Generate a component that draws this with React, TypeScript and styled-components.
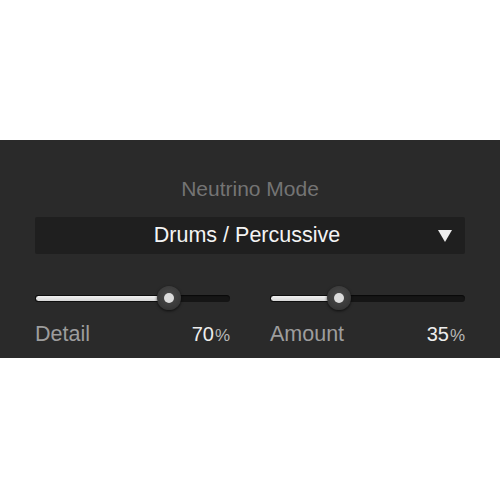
import styled, { createGlobalStyle } from "styled-components"

const GlobalStyle = createGlobalStyle`
  html, body {
    margin: 0;
    padding: 0;
    background: #ffffff;
    font-family: "Liberation Sans", Arial, sans-serif;
  }
`

const Panel = styled.div`
  margin-top: 140px;
  height: 218px;
  box-sizing: border-box;
  padding: 37px 35px 0;
  background: #2a2a2a;
  display: flex;
  flex-direction: column;
`

const Title = styled.div`
  text-align: center;
  font-size: 21px;
  line-height: 24px;
  color: #747474;
`

const Select = styled.div`
  margin-top: 16px;
  height: 37px;
  background: #1f1f1f;
  border-radius: 2px;
  display: flex;
  align-items: center;
  padding: 0 13px;
`

const SelectText = styled.div`
  flex: 1;
  text-align: center;
  font-size: 21.5px;
  color: #f4f4f4;
  padding-left: 8px;
`

const Arrow = styled.svg`
  width: 14px;
  height: 12px;
  display: block;
`

const Controls = styled.div`
  margin-top: 31px;
  display: grid;
  grid-template-columns: 1fr 1fr;
  column-gap: 40px;
`

const Control = styled.div`
  display: flex;
  flex-direction: column;
`

const SliderBox = styled.div`
  height: 26px;
  display: flex;
  align-items: center;
`

const Track = styled.div`
  position: relative;
  width: 100%;
  height: 7px;
  border-radius: 4px;
  background: #151515;
  box-shadow: inset 0 1px 1px rgba(0, 0, 0, 0.6);
`

const Fill = styled.div`
  position: absolute;
  left: 0;
  top: 0;
  bottom: 0;
  border-radius: 4px;
  background: linear-gradient(#f0f0f0, #d6d6d6);
  border: 1px solid #0e0e0e;
  box-sizing: border-box;
`

const Thumb = styled.div`
  position: absolute;
  top: 50%;
  width: 24px;
  height: 24px;
  margin-left: -12px;
  margin-top: -12px;
  border-radius: 50%;
  background: radial-gradient(circle at 50% 40%, #4a4a4a 0%, #3a3a3a 60%, #2c2c2c 100%);
  box-shadow: 0 1px 3px rgba(0, 0, 0, 0.7);
  display: flex;
  align-items: center;
  justify-content: center;

  &::after {
    content: "";
    width: 10px;
    height: 10px;
    border-radius: 50%;
    background: #dcdcdc;
  }
`

const LabelRow = styled.div`
  margin-top: 11px;
  display: flex;
  justify-content: space-between;
  align-items: baseline;
  line-height: 24px;
`

const Label = styled.span`
  font-size: 21.5px;
  color: #9d9d9d;
`

const Value = styled.span`
  font-size: 20px;
  color: #ededed;
`

const Percent = styled.span`
  font-size: 17px;
  color: #b8b8b8;
  margin-left: 1px;
`

type SliderProps = { label: string; value: number; pos: number }

const Slider = ({ label, value, pos }: SliderProps) => (
  <Control>
    <SliderBox>
      <Track>
        <Fill style={{ width: `${pos}%` }} />
        <Thumb style={{ left: `${pos}%` }} />
      </Track>
    </SliderBox>
    <LabelRow>
      <Label>{label}</Label>
      <Value>
        {value}
        <Percent>%</Percent>
      </Value>
    </LabelRow>
  </Control>
)

export default function App() {
  return (
    <>
      <GlobalStyle />
      <Panel>
        <Title>Neutrino Mode</Title>
        <Select>
          <SelectText>Drums / Percussive</SelectText>
          <Arrow viewBox="0 0 14 12">
            <polygon points="0,0 14,0 7,12" fill="#eeeeee" />
          </Arrow>
        </Select>
        <Controls>
          <Slider label="Detail" value={70} pos={68.7} />
          <Slider label="Amount" value={35} pos={35.4} />
        </Controls>
      </Panel>
    </>
  )
}
